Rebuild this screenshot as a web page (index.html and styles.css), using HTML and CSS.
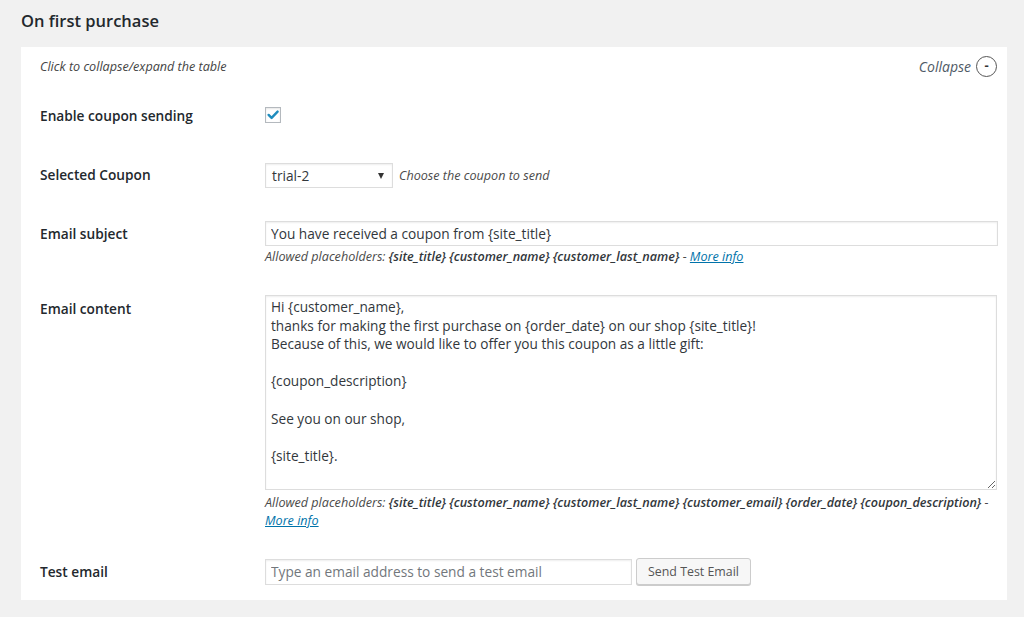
FILE: index.html
```html
<!DOCTYPE html>
<html lang="en">
<head>
<meta charset="utf-8">
<title>On first purchase</title>
<link rel="stylesheet" href="styles.css">
</head>
<body>
<h2 class="section-title">On first purchase</h2>
<div class="panel">
  <div class="panel-head">
    <span class="hint">Click to collapse/expand the table</span>
    <span class="collapse">Collapse <span class="collapse-icon">-</span></span>
  </div>

  <div class="row row-enable">
    <div class="label">Enable coupon sending</div>
    <div class="field">
      <span class="checkbox">
        <svg viewBox="0 0 16 16" width="16" height="16" aria-hidden="true"><path d="M3.6 7.9 L6.6 10.9 L12.6 4.6" fill="none" stroke="#1e8cbe" stroke-width="2.4" stroke-linecap="round" stroke-linejoin="round"/></svg>
      </span>
    </div>
  </div>

  <div class="row row-coupon">
    <div class="label">Selected Coupon</div>
    <div class="field inline">
      <div class="select"><span>trial-2</span><span class="caret"></span></div>
      <span class="desc">Choose the coupon to send</span>
    </div>
  </div>

  <div class="row row-subject">
    <div class="label">Email subject</div>
    <div class="field">
      <input class="text wide" type="text" value="You have received a coupon from {site_title}">
      <p class="desc">Allowed placeholders: <b>{site_title}</b> <b>{customer_name}</b> <b>{customer_last_name}</b> - <a href="#">More info</a></p>
    </div>
  </div>

  <div class="row row-content">
    <div class="label">Email content</div>
    <div class="field">
      <textarea class="area">Hi {customer_name},
thanks for making the first purchase on {order_date} on our shop {site_title}!
Because of this, we would like to offer you this coupon as a little gift:

{coupon_description}

See you on our shop,

{site_title}.</textarea>
      <p class="desc">Allowed placeholders: <b>{site_title}</b> <b>{customer_name}</b> <b>{customer_last_name}</b> <b>{customer_email}</b> <b>{order_date}</b> <b>{coupon_description}</b> -<br><a href="#">More info</a></p>
    </div>
  </div>

  <div class="row row-test">
    <div class="label">Test email</div>
    <div class="field inline">
      <input class="text test" type="text" placeholder="Type an email address to send a test email">
      <button class="button" type="button">Send Test Email</button>
    </div>
  </div>
</div>
</body>
</html>
```

FILE: styles.css
```css
html, body {
  margin: 0;
  padding: 0;
  background: #f1f1f1;
}
body {
  font-family: "Open Sans", "Noto Sans", sans-serif;
  color: #23282d;
  font-size: 14px;
}
.section-title {
  margin: 0;
  padding: 10px 0 0 21px;
  font-size: 16.5px;
  line-height: 22px;
  font-weight: 600;
  color: #23282d;
}
.panel {
  background: #fff;
  margin: 15px 17px 0 21px;
  padding: 9px 10px 15px 19px;
}
.panel-head {
  display: flex;
  align-items: center;
  justify-content: space-between;
  height: 21px;
}
.hint {
  font-style: italic;
  font-size: 12.6px;
  color: #444;
}
.collapse {
  display: flex;
  align-items: center;
  gap: 5px;
  font-style: italic;
  font-size: 14px;
  color: #4f5a66;
}
.collapse-icon {
  box-sizing: border-box;
  width: 21px;
  height: 21px;
  border: 1.5px solid #555;
  border-radius: 50%;
  display: flex;
  align-items: center;
  justify-content: center;
  font-style: normal;
  font-weight: 700;
  font-size: 13px;
  line-height: 1;
  color: #333;
  padding-bottom: 2px;
}
.row {
  display: grid;
  grid-template-columns: 225px 1fr;
  align-items: start;
}
.label {
  font-weight: 600;
  font-size: 13.7px;
  line-height: 20px;
  color: #23282d;
}
.row-enable { margin-top: 29px; }
.row-enable .field { padding-top: 1px; }
.row-coupon { margin-top: 37px; }
.row-coupon .label { margin-top: 2px; }
.row-subject { margin-top: 33px; }
.row-subject .label { margin-top: 3px; }
.row-content { margin-top: 29px; }
.row-content .label { margin-top: 4px; }
.row-test { margin-top: 29px; }
.row-test .label { margin-top: 3px; }
.row-test .field { margin-top: -1px; }

.field.inline {
  display: flex;
  align-items: center;
}
.checkbox {
  display: block;
  box-sizing: border-box;
  width: 16px;
  height: 16px;
  border: 1px solid #b4b9be;
  background: #fff;
  box-shadow: inset 0 1px 2px rgba(0,0,0,.1);
}
.checkbox svg {
  display: block;
  margin: -1px 0 0 -1px;
}
.select {
  box-sizing: border-box;
  width: 128px;
  height: 25px;
  border: 1px solid #ddd;
  box-shadow: inset 0 1px 2px rgba(0,0,0,.07);
  display: flex;
  align-items: center;
  justify-content: space-between;
  padding: 0 8px 0 6px;
  font-size: 13.7px;
  color: #32373c;
}
.caret {
  width: 0;
  height: 0;
  border-left: 3.5px solid transparent;
  border-right: 3.5px solid transparent;
  border-top: 6px solid #333;
}
.desc {
  font-style: italic;
  font-size: 12.6px;
  line-height: 18px;
  color: #4a4a4a;
  margin: 0;
}
.field.inline .desc { margin-left: 6px; }
.desc b {
  font-weight: 600;
  color: #32373c;
}
.desc a {
  color: #0073aa;
  text-decoration: underline;
}
.text {
  display: block;
  box-sizing: border-box;
  height: 25px;
  border: 1px solid #ddd;
  box-shadow: inset 0 1px 2px rgba(0,0,0,.07);
  padding: 0 5px;
  margin: 0;
  font-family: "Open Sans", "Noto Sans", sans-serif;
  font-size: 13.7px;
  color: #32373c;
  background: #fff;
  outline: none;
}
.text.wide { width: 733px; margin-bottom: 2px; }
.text.test { width: 367px; height: 26px; }
.text::placeholder { color: #72777c; }
.area {
  display: block;
  box-sizing: border-box;
  width: 732px;
  height: 195px;
  margin: 0 0 4px;
  border: 1px solid #ddd;
  box-shadow: inset 0 1px 2px rgba(0,0,0,.07);
  padding: 2px 5px;
  font-family: "Open Sans", "Noto Sans", sans-serif;
  font-size: 13.65px;
  line-height: 18.6px;
  color: #32373c;
  background: #fff;
  outline: none;
  resize: vertical;
  overflow: hidden;
}
.button {
  box-sizing: border-box;
  margin-left: 4px;
  height: 27px;
  width: 115px;
  padding: 0;
  white-space: nowrap;
  border: 1px solid #ccc;
  border-radius: 3px;
  background: #f7f7f7;
  box-shadow: 0 1px 0 #ccc;
  font-family: "Open Sans", "Noto Sans", sans-serif;
  font-size: 12.4px;
  color: #555;
  cursor: pointer;
}
```
